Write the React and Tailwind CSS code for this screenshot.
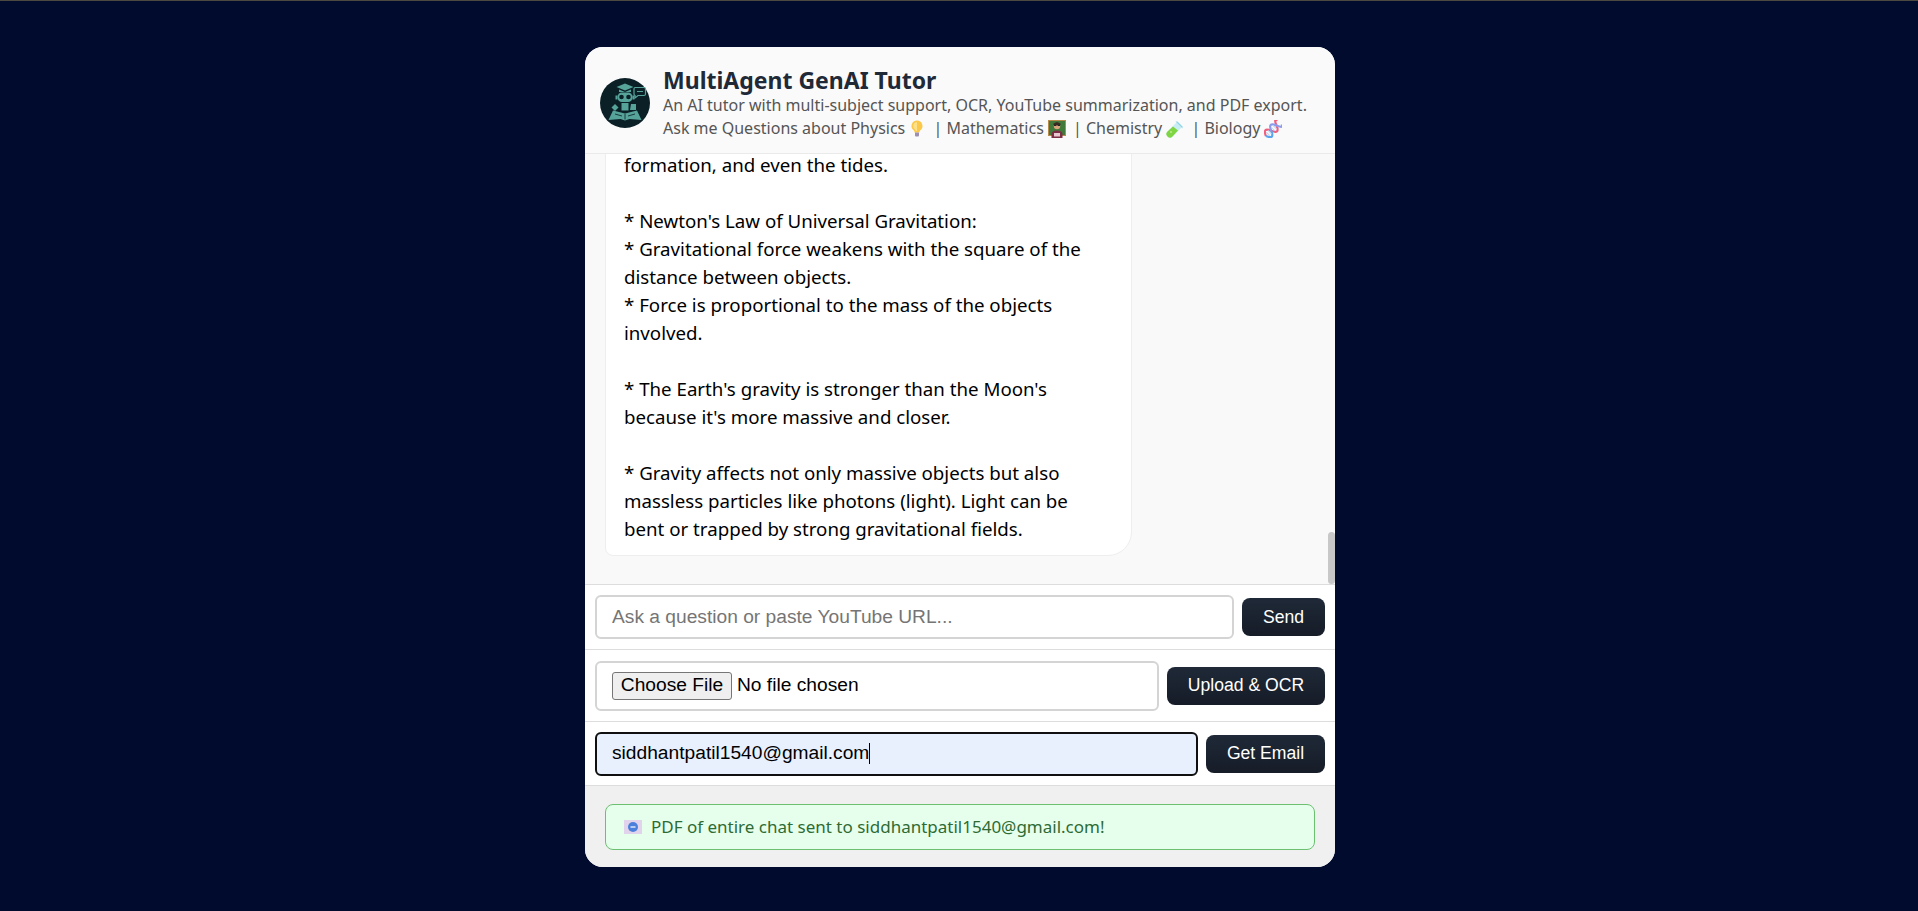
const Bulb = () => (
  <svg viewBox="0 0 16 18" className="inline-block w-[16px] h-[19px] ml-[4px] mr-[4px] align-[-4px]">
    <path d="M8 1a5.500 5.500 0 0 0-3.400 9.800c.7.600 1 1.300 1 2.200h4.800c0-.9.300-1.600 1-2.200A5.500 5.500 0 0 0 8 1z" fill="#fbc84a" />
    <path d="M8 2.500a4 4 0 0 0-2.500 7c.5.400 1 1 1.200 2h1.300z" fill="#fde08a" />
    <path d="M6 13h4v3a1 1 0 0 1-1 1H7a1 1 0 0 1-1-1z" fill="#9c8fb0" />
  </svg>
);

const Teacher = () => (
  <svg viewBox="0 0 18 18" className="inline-block w-[18px] h-[18px] ml-[4px] mr-[3px] align-[-4px]">
    <rect x="0.500" y="0.500" width="17" height="15" fill="#3f7a3a" stroke="#b58a4a" strokeWidth="1" />
    <circle cx="9" cy="6" r="3.200" fill="#d9a47c" />
    <path d="M5.500 5V3.500L9 2l3.500 1.500V5z" fill="#3a2a22" />
    <path d="M6 5.500h2.500M9.500 5.500H12" stroke="#222" strokeWidth="1" />
    <path d="M3.500 18v-4c0-2 2-3.500 5.500-3.500s5.500 1.500 5.500 3.500v4z" fill="#7a2f45" />
    <rect x="6" y="13" width="6" height="3.500" fill="#e8c8d0" />
  </svg>
);

const TestTube = () => (
  <svg viewBox="0 0 18 18" className="inline-block w-[18px] h-[18px] ml-[4px] mr-[3px] align-[-4px]">
    <path d="M10.500 2.500l5 5-9 9a3.500 3.500 0 0 1-5-5z" fill="#c9edf5" />
    <path d="M7 6.500l5 4-5.500 6a3.500 3.500 0 0 1-5-5z" fill="#7fd544" />
    <circle cx="5" cy="12" r="1" fill="#b9ee8c" />
    <path d="M9.500 1.500h2l5 5v2z" fill="#8fd4e8" />
  </svg>
);

const Dna = () => (
  <svg viewBox="0 0 18 18" fill="none" className="inline-block w-[18px] h-[18px] ml-[4px] align-[-4px]">
    <g transform="rotate(-45 9 9)">
      <path d="M-1 9c2.500-6 5-6 7.500 0s5 6 7.500 0 3-5 4.500-3" stroke="#f0607f" strokeWidth="2.200" />
      <path d="M-1 9c2.500 6 5 6 7.500 0" stroke="#5aa5ee" strokeWidth="2.200" />
      <path d="M6.500 9c2.500-6 5-6 7.500 0s3 5 4.500 3" stroke="#8d9bea" strokeWidth="2.200" />
      <path d="M2 6.500v5M4.500 6.500v5M9 6.500v5M11.500 6.500v5" stroke="#bcd4f0" strokeWidth="1" />
    </g>
  </svg>
);

const MailIcon = () => (
  <svg viewBox="0 0 18 14" className="inline-block w-[18px] h-[14px] align-[-2px]">
    <rect width="18" height="14" fill="#e2d3ec" />
    <circle cx="9" cy="7" r="5" fill="#4a80dc" />
    <path d="M6.500 7h5" stroke="#dbe7f8" strokeWidth="1.500" />
  </svg>
);

// robot with a grad cap, reading a book
const Logo = () => (
  <svg viewBox="0 0 50 50" className="w-[50px] h-[50px] shrink-0">
    <circle cx="25" cy="25" r="25" fill="#0b1f26" />
    <g fill="#56a39a">
      <path d="M25 5.500l8.500 3.500-8.500 3.500-8.500-3.500z" />
      <path d="M19 11.500l6 2.500 6-2.500v2.500H19z" />
      <rect x="17.500" y="14.500" width="15" height="9.500" rx="4.500" />
      <rect x="15.500" y="17.500" width="2" height="4" />
      <rect x="32.500" y="17.500" width="2" height="4" />
      <rect x="21.500" y="25" width="7" height="7.500" />
      <path d="M15 26l3.500 3.500-3.500 3.500-3.500-3.500z" />
      <path d="M31 26l5 0v6h-6z" />
      <path d="M13 32.500l12 3 12-3 4.500 9.500-12-1-4.500 1.500-4.500-1.500-12 1z" />
    </g>
    <path d="M35 9.500h9a1.500 1.500 0 0 1 1.500 1.500v5a1.500 1.500 0 0 1-1.500 1.500h-6l-3 2.500v-2.500a1.500 1.500 0 0 1-1-1.500v-5a1.500 1.500 0 0 1 1-1.500z" fill="none" stroke="#56a39a" strokeWidth="1.200" />
    <path d="M37 13.500h6" stroke="#56a39a" strokeWidth="1.200" />
    <circle cx="21.500" cy="19" r="2.300" fill="#0b1f26" />
    <circle cx="28.500" cy="19" r="2.300" fill="#0b1f26" />
    <path d="M25 36v5.500M15 36l7 2M35 36l-7 2" stroke="#0b1f26" strokeWidth="0.800" />
  </svg>
);

const btn = "h-[38px] rounded-[8px] bg-linear-to-b from-[#1f2937] to-[#161c28] text-white text-[17.6px]";

export default function App() {
  return (
    <div className="min-h-screen bg-[#000b2e] pt-[47px] pl-[2px] border-t border-[#4a4a40] font-['Noto_Sans',sans-serif]">
      <div className="mx-auto w-[750px] h-[820px] -mt-px rounded-[18px] overflow-hidden bg-[#f0f0f0] flex flex-col">
        <div className="h-[107px] shrink-0 bg-[#fafafa] border-b border-[#eaeaea] flex items-center pl-[15px] pt-[5px]">
          <Logo />
          <div className="ml-[13px]">
            <h1 className="text-[23px] leading-[28px] font-bold text-[#1f2937]">MultiAgent GenAI Tutor</h1>
            <p className="text-[16px] leading-[23px] text-[#555]">An AI tutor with multi-subject support, OCR, YouTube summarization, and PDF export.</p>
            <p className="text-[16px] leading-[23px] text-[#555]">
              Ask me Questions about Physics<Bulb /> | Mathematics<Teacher /> | Chemistry<TestTube /> | Biology<Dna />
            </p>
          </div>
        </div>

        <div className="relative h-[430px] shrink-0 bg-[#f9f9f9] overflow-hidden flex flex-col justify-end pb-[28px] pl-[20px]">
          <div className="w-[527px] bg-white border border-[#eeeeee] rounded-br-[24px] rounded-bl-[8px] pl-[18px] pr-[20px] pb-[12px] text-[18.7px] leading-[28px] text-black">
            <p>formation, and even the tides.</p>
            <p className="mt-[28px]">* Newton's Law of Universal Gravitation:</p>
            <p>* Gravitational force weakens with the square of the distance between objects.</p>
            <p>* Force is proportional to the mass of the objects involved.</p>
            <p className="mt-[28px]">* The Earth's gravity is stronger than the Moon's because it's more massive and closer.</p>
            <p className="mt-[28px]">* Gravity affects not only massive objects but also massless particles like photons (light). Light can be bent or trapped by strong gravitational fields.</p>
          </div>
          <div className="absolute right-0 bottom-0 w-[7px] h-[52px] rounded-full bg-[#c8c8c8]" />
        </div>

        <div className="h-[65px] shrink-0 bg-white border-t border-[#dddddd] flex items-center gap-2 px-[10px] font-['Liberation_Sans',sans-serif]">
          <input placeholder="Ask a question or paste YouTube URL..." className="flex-1 h-[44px] px-[15px] text-[19.2px] border-2 border-[#d4d4d4] rounded-[6px] placeholder:text-[#757575] outline-none" />
          <button className={`w-[83px] ${btn}`}>Send</button>
        </div>

        <div className="h-[72px] shrink-0 bg-white border-t border-[#dddddd] flex items-center gap-2 px-[10px] font-['Liberation_Sans',sans-serif]">
          <div className="flex-1 h-[50px] px-[15px] border-2 border-[#d4d4d4] rounded-[6px] flex items-center text-[19.2px] text-black">
            <span className="h-[28px] w-[120px] flex items-center justify-center border border-[#767676] rounded-[3px] bg-[#efefef]">Choose File</span>
            <span className="ml-[5px]">No file chosen</span>
          </div>
          <button className={`w-[158px] ${btn}`}>Upload &amp; OCR</button>
        </div>

        <div className="h-[64px] shrink-0 bg-white border-t border-[#dddddd] flex items-center gap-2 px-[10px] font-['Liberation_Sans',sans-serif]">
          <div className="flex-1 h-[44px] px-[15px] border-2 border-[#101010] rounded-[6px] bg-[#e8f0fe] flex items-center text-[19.2px] text-black">
            siddhantpatil1540@gmail.com<span className="w-px h-[21px] bg-black" />
          </div>
          <button className={`w-[119px] ${btn}`}>Get Email</button>
        </div>

        <div className="flex-1 bg-[#f0f0f0] border-t border-[#dddddd] px-[20px] pt-[18px]">
          <div className="h-[46px] border border-[#6cc070] rounded-[8px] bg-[#e6ffec] flex items-center pl-[18px] text-[17px] text-[#2e6b34]">
            <MailIcon />
            <span className="ml-[9px]">PDF of entire chat sent to siddhantpatil1540@gmail.com!</span>
          </div>
        </div>
      </div>
    </div>
  );
}
